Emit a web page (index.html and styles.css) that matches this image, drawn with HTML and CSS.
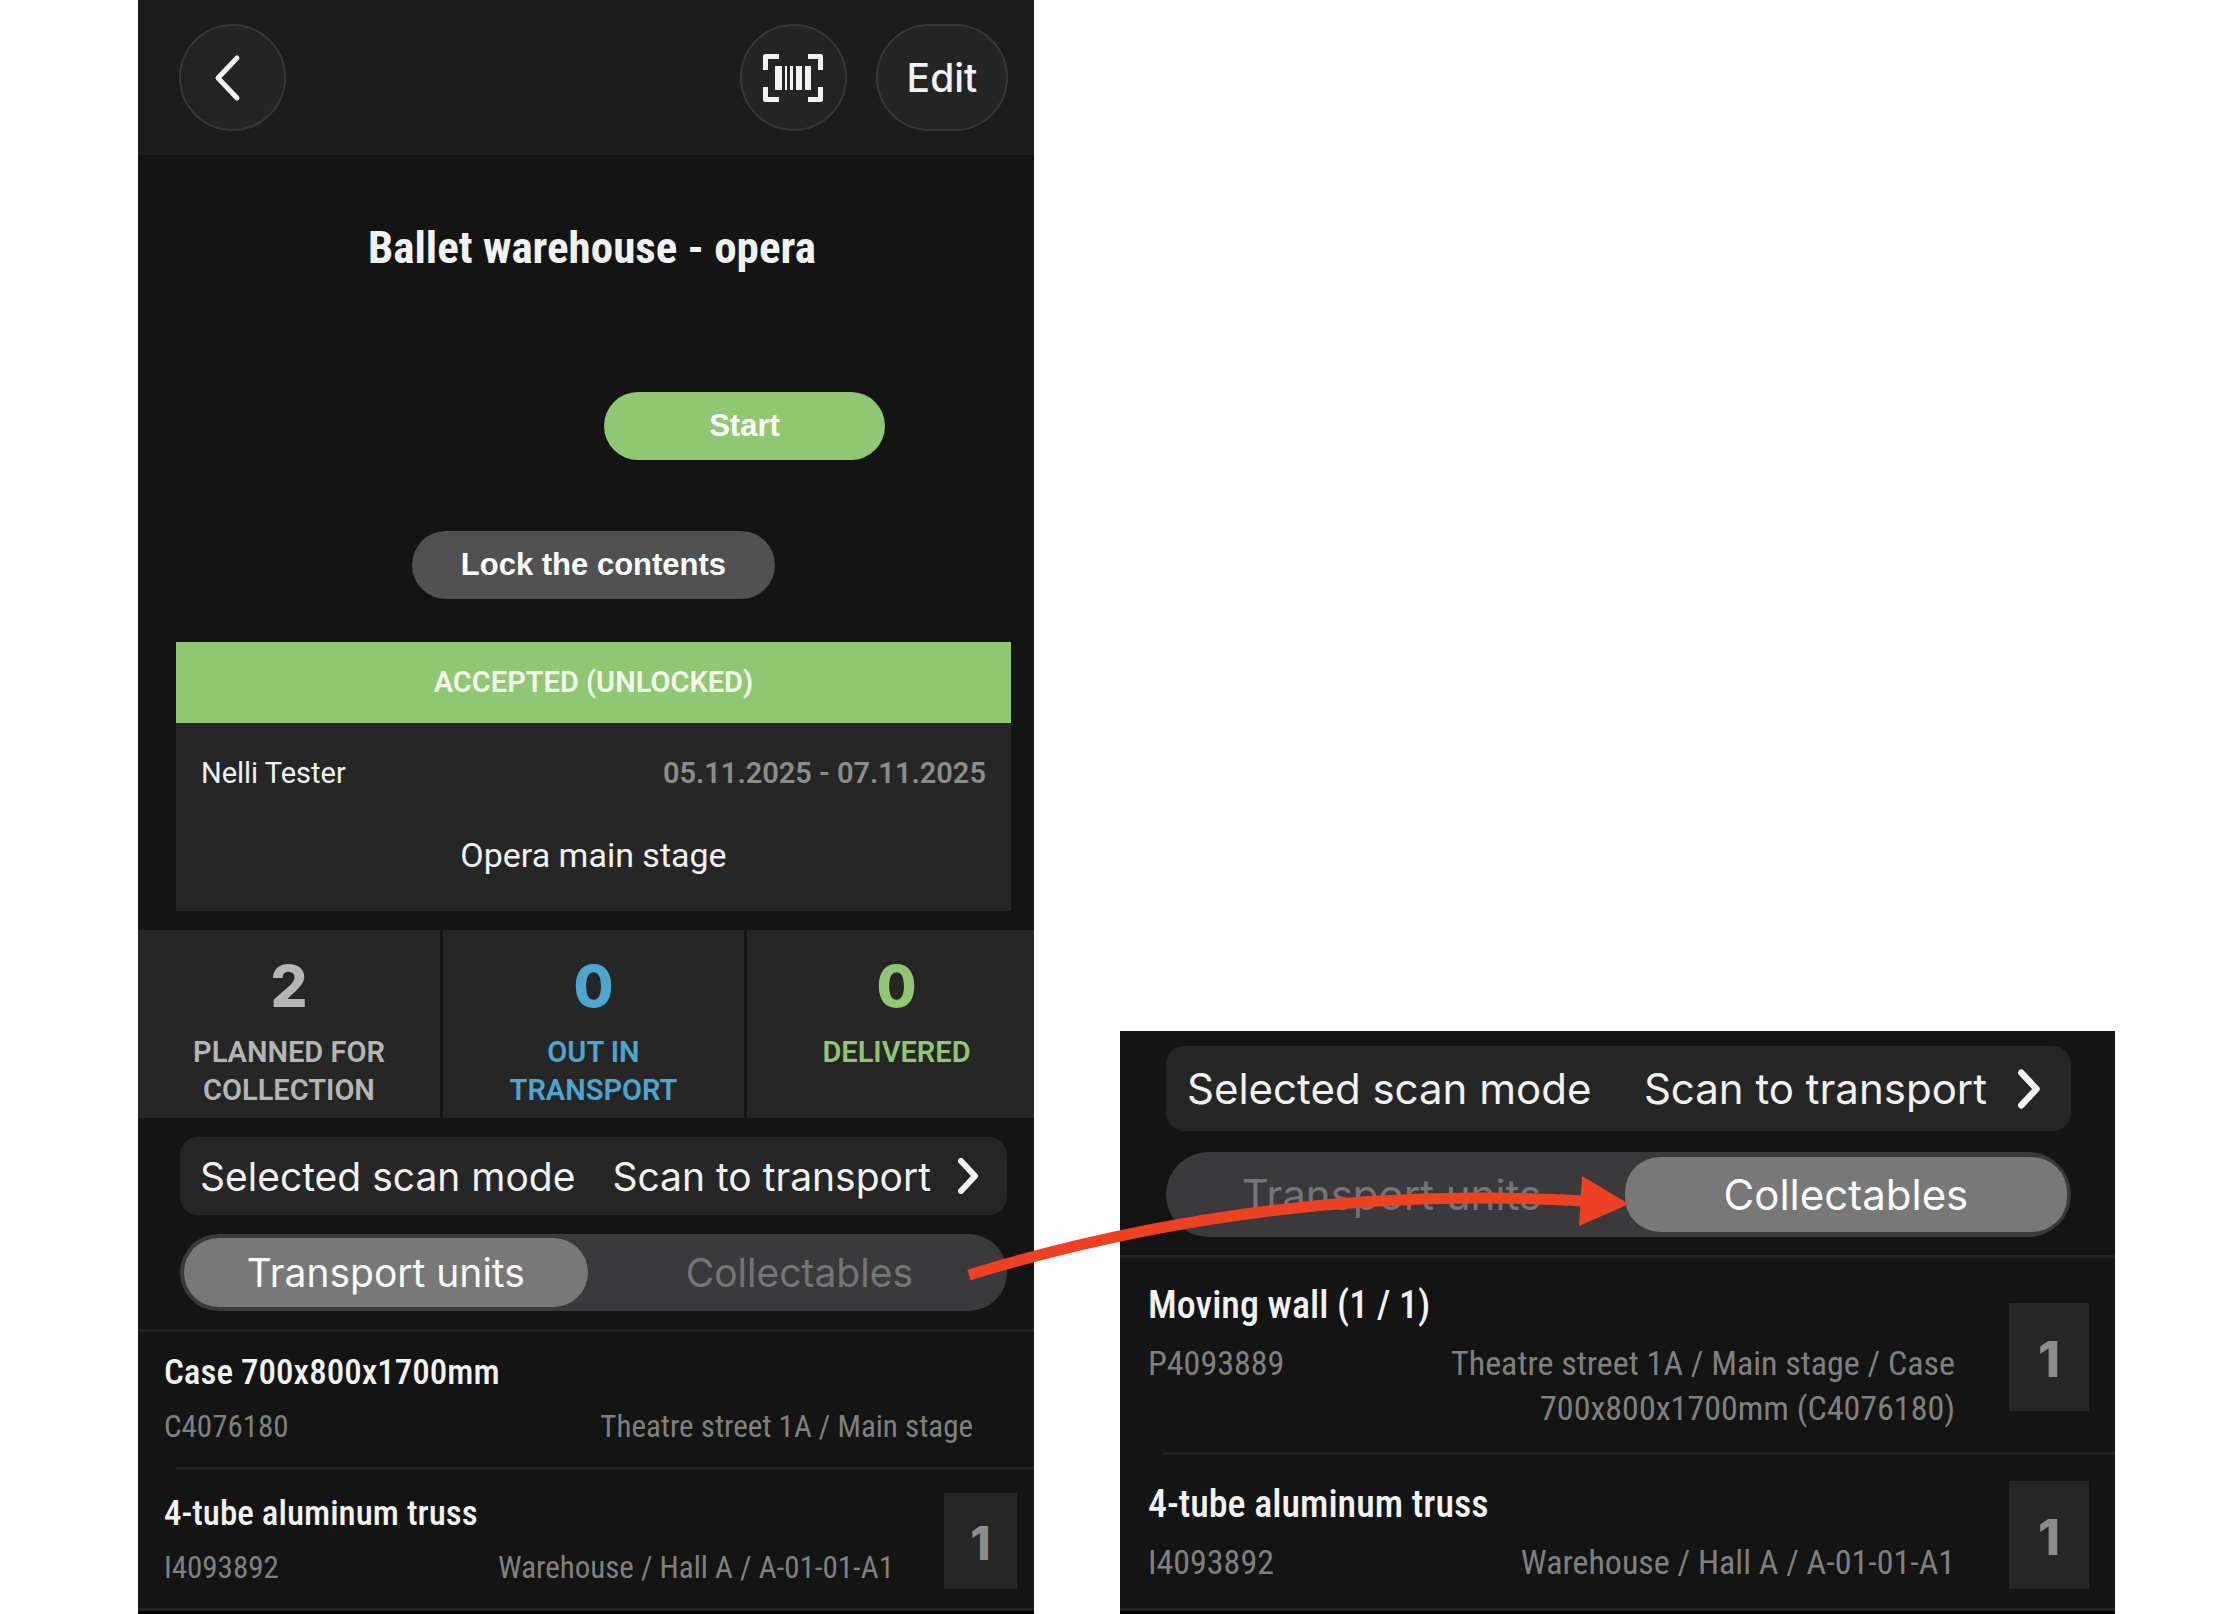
FILE: index.html
```html
<!DOCTYPE html>
<html lang="en">
<head>
<meta charset="utf-8">
<title>Ballet warehouse - opera</title>
<link rel="stylesheet" href="styles.css">
</head>
<body>
<main class="stage">
  <section class="screen">
    <header class="topbar">
      <button class="round" aria-label="Back">
        <svg class="back" width="32" height="48" viewBox="0 0 32 48"><path d="M25 4 6 24l19 20" fill="none" stroke="currentColor" stroke-width="5" stroke-linecap="round" stroke-linejoin="round"/></svg>
      </button>
      <div class="actions">
        <button class="round" aria-label="Scan barcode">
          <svg width="60" height="48" viewBox="0 0 60 48">
            <path d="M16 2.500H2.500V16M45 2.500H57.500V16M16 45.500H2.500V33M45 45.500H57.500V33" fill="none" stroke="currentColor" stroke-width="5" stroke-linejoin="round"/>
            <path d="M12 12h7v24h-7zM22 12h2v24h-2zM27 12h3v24h-3zM33 12h6v24h-6zM42 12h6v24h-6z" fill="currentColor"/>
          </svg>
        </button>
        <button class="round edit">Edit</button>
      </div>
    </header>
    <h1 class="title">Ballet warehouse - opera</h1>
    <div class="start-row"><button class="pill start">Start</button></div>
    <div class="lock-row"><button class="pill lock">Lock the contents</button></div>
    <section class="card">
      <div class="status">ACCEPTED (UNLOCKED)</div>
      <div class="meta"><span>Nelli Tester</span><span class="dates">05.11.2025 - 07.11.2025</span></div>
      <div class="place">Opera main stage</div>
    </section>
    <section class="stats">
      <div class="stat"><strong>2</strong><span>PLANNED FOR COLLECTION</span></div>
      <div class="stat out"><strong>0</strong><span>OUT IN TRANSPORT</span></div>
      <div class="stat done"><strong>0</strong><span>DELIVERED</span></div>
    </section>
    <button class="mode">
      <span>Selected scan mode</span><span class="value">Scan to transport</span>
      <svg class="chevron" viewBox="0 0 24 38"><path d="M4 4l14 15L4 34" fill="none" stroke="currentColor" stroke-width="6" stroke-linecap="round" stroke-linejoin="round"/></svg>
    </button>
    <div class="tabs">
      <button class="tab active">Transport units</button>
      <button class="tab">Collectables</button>
    </div>
    <ul class="list">
      <li class="item">
        <div class="info uncounted">
          <div class="name">Case 700x800x1700mm</div>
          <div class="detail"><span>C4076180</span><span class="where">Theatre street 1A / Main stage</span></div>
        </div>
      </li>
      <li class="item">
        <div class="info">
          <div class="name">4-tube aluminum truss</div>
          <div class="detail"><span>I4093892</span><span class="where">Warehouse / Hall A / A-01-01-A1</span></div>
        </div>
        <div class="count">1</div>
      </li>
    </ul>
  </section>

  <section class="screen large">
    <button class="mode">
      <span>Selected scan mode</span><span class="value">Scan to transport</span>
      <svg class="chevron" viewBox="0 0 24 38"><path d="M4 4l14 15L4 34" fill="none" stroke="currentColor" stroke-width="6" stroke-linecap="round" stroke-linejoin="round"/></svg>
    </button>
    <div class="tabs">
      <button class="tab">Transport units</button>
      <button class="tab active">Collectables</button>
    </div>
    <ul class="list">
      <li class="item">
        <div class="info">
          <div class="name">Moving wall (1 / 1)</div>
          <div class="detail"><span>P4093889</span><span class="where">Theatre street 1A / Main stage / Case 700x800x1700mm (C4076180)</span></div>
        </div>
        <div class="count">1</div>
      </li>
      <li class="item">
        <div class="info">
          <div class="name">4-tube aluminum truss</div>
          <div class="detail"><span>I4093892</span><span class="where">Warehouse / Hall A / A-01-01-A1</span></div>
        </div>
        <div class="count">1</div>
      </li>
    </ul>
  </section>

  <svg class="arrow" viewBox="0 0 2236 1614" aria-hidden="true">
    <path d="M969 1275Q1270 1183 1584 1201" fill="none" stroke="#ee4023" stroke-width="11"/>
    <path d="M1582 1176 1629 1204 1579 1226Z" fill="#ee4023"/>
  </svg>
</main>
</body>
</html>
```
FILE: styles.css
```css
* { box-sizing: border-box; }

body {
  margin: 0;
  background: #fff;
}

button {
  margin: 0;
  padding: 0;
  border: 0;
  color: inherit;
  font: inherit;
  cursor: pointer;
}

.stage {
  position: relative;
  display: grid;
  grid-template-columns: 896fr 995fr;
  column-gap: 4.35%;
  align-items: end;
  min-height: 100vh;
  padding: 0 5.41% 0 6.17%;
}

.arrow {
  position: absolute;
  top: 0;
  left: 0;
  width: 100%;
  pointer-events: none;
}

.screen {
  --ui: 39px;
  --name: 35px;
  --detail: 31px;
  --detail-line: 40px;
  --count: 46px;
  min-width: 0;
  border-bottom: 3px solid #000;
  background: #141414;
  color: #f2f2f2;
  font-family: "Roboto Condensed", Roboto, sans-serif;
}

.large {
  --ui: 42px;
  --name: 38px;
  --detail: 34px;
  --detail-line: 45px;
  --count: 50px;
  padding-top: 15px;
}

.topbar {
  display: flex;
  justify-content: space-between;
  height: 155px;
  padding: 24px 26px 0 41px;
  background: #1c1c1c;
}

.actions {
  display: flex;
  gap: 29px;
}

.round {
  display: flex;
  align-items: center;
  justify-content: center;
  width: 107px;
  height: 107px;
  border: 2px solid #383838;
  border-radius: 54px;
  background: #242424;
}

.back { margin-right: 8px; }

.edit {
  width: 132px;
  font: 500 39px Inter, sans-serif;
}

.title {
  margin: 66px 0 0;
  padding-left: 12px;
  font-size: 45px;
  font-weight: 700;
  line-height: 54px;
  text-align: center;
}

.start-row {
  display: flex;
  justify-content: flex-end;
  margin-top: 117px;
  padding-right: 149px;
}

.lock-row {
  display: flex;
  justify-content: center;
  margin-top: 71px;
  padding-left: 15px;
}

.pill {
  height: 68px;
  border-radius: 34px;
  color: #fff;
  font: 700 31px "Liberation Sans", Arial, sans-serif;
}

.start {
  width: 281px;
  background: #90c772;
}

.lock {
  width: 363px;
  background: #515151;
}

.card {
  height: 269px;
  margin: 43px 23px 0 38px;
  background: #262626;
  font-family: Roboto, sans-serif;
}

.status {
  background: #90c772;
  color: #f4faf0;
  font-size: 29px;
  font-weight: 600;
  line-height: 81px;
  text-align: center;
}

.meta {
  display: flex;
  justify-content: space-between;
  padding: 30px 25px 0;
  font-size: 29px;
  line-height: 40px;
}

.dates {
  color: #8c8c8c;
  font-weight: 600;
}

.place {
  margin-top: 40px;
  font-size: 34px;
  line-height: 44px;
  text-align: center;
}

.stats {
  display: grid;
  grid-template-columns: 302fr 301fr 287fr;
  gap: 3px;
  margin-top: 19px;
}

.stat {
  display: flex;
  flex-direction: column;
  align-items: center;
  height: 188px;
  padding: 22px 40px 0;
  background: #262626;
  color: #b5b5b5;
  font: 600 29px/38px Roboto, sans-serif;
  text-align: center;
}

.stat strong {
  margin-bottom: 13px;
  font: 800 58px/68px Inter, sans-serif;
}

.stat.out { color: #4da6d0; }

.stat.done {
  padding-right: 28px;
  color: #90c772;
}

.mode {
  display: flex;
  align-items: center;
  width: calc(100% - 69px);
  height: 78px;
  margin: 19px 0 0 42px;
  padding: 0 26px 0 20px;
  border-radius: 18px;
  background: #262626;
  font: 400 var(--ui) Inter, sans-serif;
  white-space: nowrap;
}

.value { margin-left: auto; }

.chevron {
  width: 24px;
  height: 38px;
  margin-left: 26px;
}

.tabs {
  display: flex;
  height: 77px;
  margin: 19px 27px 18px 42px;
  padding: 4px;
  border-radius: 39px;
  background: #3a3a3c;
}

.tab {
  flex: 1;
  padding-left: 8px;
  border-radius: 35px;
  background: transparent;
  color: #757577;
  font: 400 var(--ui) Inter, sans-serif;
}

.tab.active {
  flex: 0 0 49.3%;
  padding: 0;
  background: #787878;
  color: #fafafa;
}

.list {
  margin: 0;
  padding: 0;
  border-top: 3px solid #222;
  border-bottom: 3px solid #222;
  list-style: none;
}

.item {
  position: relative;
  display: flex;
  height: 138px;
  padding: 18px 17px 0 26px;
}

.item + .item { padding-top: 21px; }

.item + .item::before {
  content: "";
  position: absolute;
  top: -3px;
  right: 0;
  left: 38px;
  height: 3px;
  background: #222;
}

.info { flex: 1; }

.uncounted { padding-right: 44px; }

.name {
  font-size: var(--name);
  font-weight: 500;
  line-height: 46px;
}

.detail {
  display: flex;
  justify-content: space-between;
  margin-top: 11px;
  color: #808080;
  font-size: var(--detail);
  line-height: var(--detail-line);
}

.where { text-align: right; }

.count {
  width: 73px;
  height: 96px;
  margin-top: 2px;
  margin-left: 50px;
  background: #262626;
  color: #8c8c8c;
  font: 800 var(--count)/100px Inter, sans-serif;
  text-align: center;
}

.large .mode {
  width: calc(100% - 90px);
  height: 85px;
  margin: 0 0 0 46px;
  padding: 0 28px 0 21px;
}

.large .chevron {
  width: 26px;
  height: 42px;
  margin-left: 30px;
}

.large .tabs {
  height: 85px;
  margin: 21px 44px 18px 46px;
  padding: 5px 4px;
  border-radius: 43px;
}

.large .tab:first-child { padding: 0 12px 0 0; }

.large .item {
  height: auto;
  padding: 24px 26px 24px 28px;
}

.large .item + .item {
  height: 153px;
  padding-top: 26px;
  padding-bottom: 0;
}

.large .detail { margin-top: 13px; }

.large .item + .item::before { left: 43px; }

.large .count {
  align-self: center;
  width: 80px;
  height: 108px;
  margin-top: 0;
  margin-left: 54px;
  line-height: 112px;
}

.large .item + .item .count { align-self: flex-start; }
```
